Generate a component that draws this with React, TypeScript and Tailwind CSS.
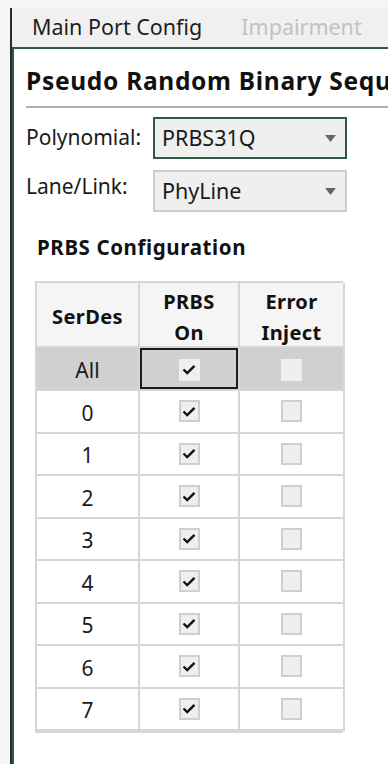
import React from "react";

const ROWS = ["0", "1", "2", "3", "4", "5", "6", "7"];

function Check() {
  return (
    <svg width="14" height="11" viewBox="0 0 14 11" fill="none">
      <path d="M1.5 5.5 L5.2 9 L12.5 1.8" stroke="#111" strokeWidth="2.4" />
    </svg>
  );
}

function CheckBox({ checked, flat }: { checked: boolean; flat?: boolean }) {
  return (
    <div
      className={
        "flex h-[22px] w-[21px] items-center justify-center bg-[#efefef] " +
        (flat ? "" : "border-2 border-[#cfcfcf]")
      }
    >
      {checked && <Check />}
    </div>
  );
}

function Select({ value, focused }: { value: string; focused?: boolean }) {
  return (
    <div
      className={
        "flex h-[42px] w-[194px] items-center justify-between border-2 bg-[#efefef] pl-[7px] pr-[9px] " +
        (focused ? "border-[#2d5c42]" : "border-[#cdcdcd]")
      }
    >
      <span className="text-[21.5px] text-[#1a1a1a]">{value}</span>
      <svg width="11" height="7" viewBox="0 0 11 7">
        <polygon points="0,0 11,0 5.5,7" fill="#666" />
      </svg>
    </div>
  );
}

const cell = "flex items-center justify-center border-r-2 border-b-2 border-[#d6d6d6]";
const head = " h-[65px] bg-[#f5f5f5] pt-[5px] text-[20px] font-bold tracking-[0.4px] text-[#111]";

export default function App() {
  return (
    <div className="h-[764px] w-[388px] overflow-hidden bg-[#f5f5f5] pl-[10px] pt-[8px] font-['Noto_Sans','Open_Sans',sans-serif] text-[#1a1a1a]">
      <div className="flex h-full flex-col border-l-2 border-[#2a2a2a]">
        <div className="flex h-[39px] items-center gap-[39px] bg-[#f0f0f0] pl-[20px] text-[21.5px]">
          <span className="text-[#1e1e1e]">Main Port Config</span>
          <span className="text-[#c2c2c2]">Impairment</span>
        </div>
        <div className="flex-1 overflow-hidden border-l-2 border-t-2 border-[#2d5c42] bg-white pl-[12px]">
          <div className="whitespace-nowrap pt-[17px] text-[24.5px] font-bold leading-[30px] tracking-[0.7px] text-[#111]">
            Pseudo Random Binary Sequence
          </div>
          <div className="mt-[10px] h-[2px] bg-[#b0b0b0]" />

          <div className="mt-[9px] flex items-center">
            <span className="w-[127px] text-[21px]">Polynomial:</span>
            <Select value="PRBS31Q" focused />
          </div>
          <div className="mt-[11px] flex items-start">
            <span className="w-[127px] pt-[1px] text-[21px]">Lane/Link:</span>
            <Select value="PhyLine" />
          </div>

          <div className="mt-[21px] pl-[11px] text-[20.5px] font-bold leading-[28px] tracking-[0.6px] text-[#111]">
            PRBS Configuration
          </div>

          <div className="ml-[9px] mt-[20px] grid w-[308px] grid-cols-[103px_100px_105px] border-l-2 border-t-2 border-b-2 border-r border-[#d6d6d6]">
            <div className={cell + head}>SerDes</div>
            <div className={cell + head + " flex-col leading-[31px]"}>
              <span>PRBS</span>
              <span>On</span>
            </div>
            <div className={cell + head + " flex-col leading-[31px]"}>
              <span>Error</span>
              <span>Inject</span>
            </div>

            <div className={cell + " h-[43px] bg-[#d0d0d0] pt-[4px] text-[21px]"}>All</div>
            <div className={cell + " h-[43px] bg-[#d0d0d0]"}>
              <div className="flex h-full w-full items-center justify-center border-2 border-[#1c1c1c] pt-[2px]">
                <CheckBox checked flat />
              </div>
            </div>
            <div className={cell + " h-[43px] bg-[#d0d0d0] pt-[2px]"}>
              <CheckBox checked={false} flat />
            </div>

            {ROWS.map((r) => (
              <React.Fragment key={r}>
                <div className={cell + " h-[42.5px] bg-white pt-[4px] text-[21px]"}>{r}</div>
                <div className={cell + " h-[42.5px] bg-white"}>
                  <CheckBox checked />
                </div>
                <div className={cell + " h-[42.5px] bg-white"}>
                  <CheckBox checked={false} />
                </div>
              </React.Fragment>
            ))}
          </div>
        </div>
      </div>
    </div>
  );
}
